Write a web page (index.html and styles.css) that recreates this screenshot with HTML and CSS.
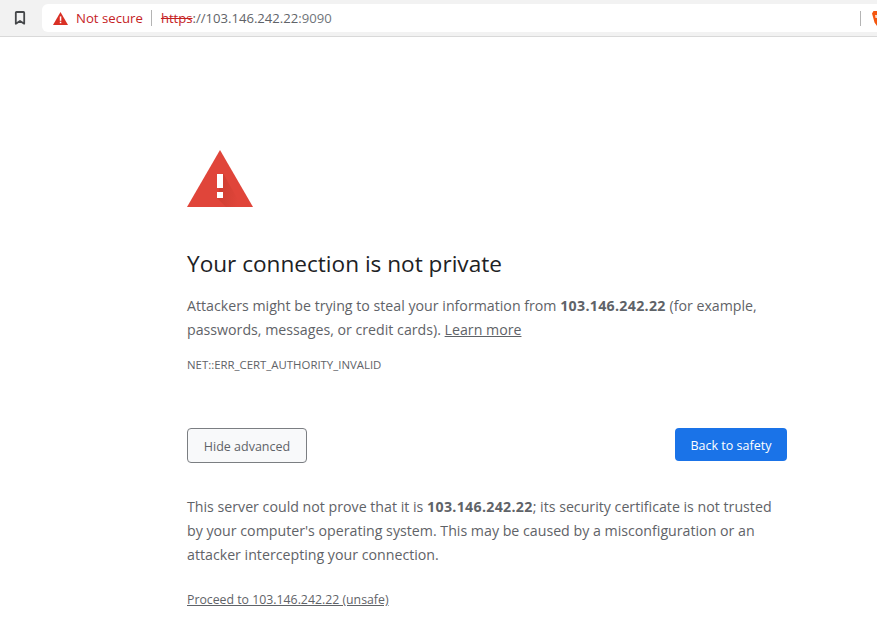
FILE: index.html
```html
<!DOCTYPE html>
<html lang="en">
<head>
<meta charset="utf-8">
<title>Privacy error</title>
<link rel="stylesheet" href="styles.css">
</head>
<body>
<header class="toolbar">
  <svg class="bookmark" width="12" height="14" viewBox="0 0 12 14"><path d="M2.600 1h6.800a.8.8 0 0 1 .8.8v10.900L6 9.900l-4.200 2.800V1.800a.8.8 0 0 1 .8-.8z" fill="none" stroke="#45474a" stroke-width="1.800" stroke-linejoin="round"/></svg>
  <div class="omnibox">
    <svg class="warn" width="15" height="13" viewBox="0 0 15 13"><path d="M7.500 0L15 13H0z" fill="#d93025"/><rect x="6.800" y="4.400" width="1.500" height="4.400" fill="#fff"/><rect x="6.800" y="9.700" width="1.500" height="1.500" fill="#fff"/></svg>
    <span class="not-secure">Not secure</span>
    <span class="sep"></span>
    <span class="url"><span class="https">https</span>://103.146.242.22<span class="port">:9090</span></span>
    <span class="end-sep"></span>
    <svg class="brave" width="5" height="15" viewBox="0 0 5 15"><path d="M1.500 0H5v15L2.500 11.500 1 6 0 2.500z" fill="#f4560f"/><path d="M3 4h2v3H3.500z" fill="#ffd9c8"/></svg>
  </div>
</header>
<main class="content">
  <svg class="hero" width="66" height="57" viewBox="0 0 66 57">
    <defs>
      <linearGradient id="shade" x1="0" y1="0" x2="1" y2="0.300">
        <stop offset="0" stop-color="#c93c30"/>
        <stop offset="1" stop-color="#e0453a"/>
      </linearGradient>
    </defs>
    <path d="M33 0L66 57H0z" fill="#e0453a"/>
    <path d="M36 23L55 57H39L30 48z" fill="url(#shade)"/>
    <rect x="30" y="24" width="6" height="14" fill="#fff"/>
    <rect x="30" y="42" width="6" height="6" fill="#fff"/>
  </svg>
  <h1 class="title">Your connection is not private</h1>
  <p class="text">Attackers might be trying to steal your information from <b>103.146.242.22</b> (for example, passwords, messages, or credit cards). <a class="learn" href="#">Learn more</a></p>
  <div class="code">NET::ERR_CERT_AUTHORITY_INVALID</div>
  <div class="buttons">
    <button class="btn btn-secondary">Hide advanced</button>
    <button class="btn btn-primary">Back to safety</button>
  </div>
  <p class="text details">This server could not prove that it is <b>103.146.242.22</b>; its security certificate is not trusted by your computer's operating system. This may be caused by a misconfiguration or an attacker intercepting your connection.</p>
  <a class="proceed" href="#">Proceed to 103.146.242.22 (unsafe)</a>
</main>
</body>
</html>
```
FILE: styles.css
```css
html, body {
  margin: 0;
  padding: 0;
  height: 100%;
  overflow: hidden;
  background: #fff;
  font-family: "Open Sans", "Noto Sans", sans-serif;
  color: #5f6368;
}
.toolbar {
  display: flex;
  align-items: center;
  height: 36px;
  background: #f2f2f2;
  border-bottom: 1px solid #d9d9d9;
  padding-left: 14px;
}
.bookmark { flex: none; margin-right: 16px; }
.omnibox {
  flex: 1;
  display: flex;
  align-items: center;
  height: 28px;
  background: #fff;
  border-radius: 6px 0 0 6px;
  padding-left: 11px;
  overflow: hidden;
  font-size: 13.2px;
}
.warn { flex: none; margin-right: 8px; }
.not-secure { color: #c5221f; }
.sep { width: 1px; height: 16px; background: #b4b4b4; margin: 0 9px 0 8px; }
.url { color: #5f6368; font-size: 13.1px; }
.https { color: #c5221f; text-decoration: line-through; }
.port { color: #70757a; }
.end-sep { width: 1px; height: 15px; background: #b4b4b4; margin-left: auto; }
.brave { flex: none; margin-left: 11px; }
.content {
  width: 600px;
  margin-left: 187px;
  padding-top: 113px;
}
.hero { display: block; }
.title {
  margin: 42px 0 0;
  font-size: 22.6px;
  font-weight: 400;
  line-height: 30px;
  color: #202124;
}
.text {
  margin: 15px 0 0;
  font-size: 14.2px;
  line-height: 24px;
}
.text b { color: #5f6368; letter-spacing: 0.3px; }
.learn { color: #5f6368; }
.code {
  margin-top: 15px;
  font-size: 11.4px;
  line-height: 16px;
}
.buttons {
  display: flex;
  justify-content: space-between;
  align-items: flex-start;
  margin-top: 55px;
}
.btn {
  font-family: inherit;
  font-size: 12.5px;
  border-radius: 4px;
  padding: 1px 0 0;
}
.btn-secondary {
  width: 120px;
  height: 35px;
  background: #f8f9fa;
  border: 1px solid #7b7e82;
  color: #5f6368;
}
.btn-primary {
  width: 112px;
  height: 33px;
  background: #1a73e8;
  border: 0;
  color: #fff;
}
.details { margin-top: 32px; }
.proceed {
  display: block;
  margin-top: 25px;
  font-size: 12.3px;
  line-height: 16px;
  color: #5f6368;
}
```
